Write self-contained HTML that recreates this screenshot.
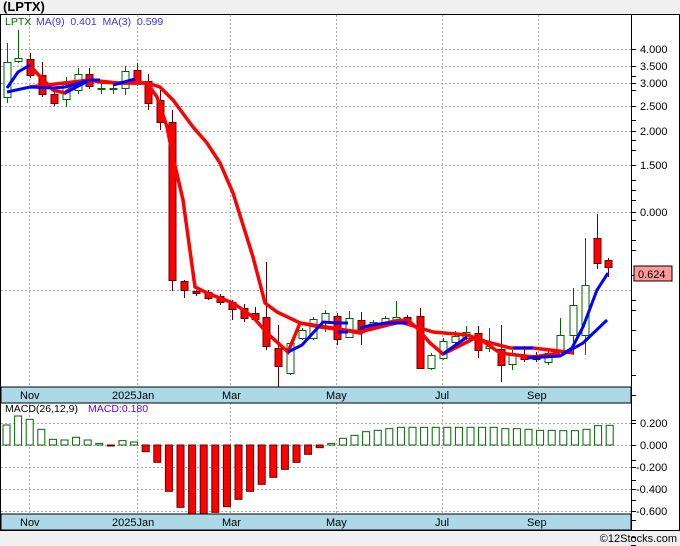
<!DOCTYPE html>
<html><head><meta charset="utf-8"><style>
body{margin:0;width:680px;height:546px;background:#f0f0f0;font-family:"Liberation Sans",sans-serif;overflow:hidden;position:relative}
svg{position:absolute;left:0;top:0}
</style></head><body>
<svg id="s" width="680" height="546" xmlns="http://www.w3.org/2000/svg" font-family="Liberation Sans, sans-serif">
<text x="3" y="11" font-size="13" font-weight="bold" fill="#000">(LPTX)</text>
<rect x="0.5" y="14.5" width="679" height="516" fill="#fff" stroke="#000"/>
<g id="grid" stroke="#aaa" stroke-dasharray="2,2" stroke-width="1"></g>
<g id="c"></g>
<polyline fill="none" stroke="#f00" stroke-width="3.5" points="30,87 90,80 117,83 147,83 160,87 173,100 193,127 207,143 220,163 233,193 253,257 265,303 277,312 300,323 320,327 360,332 400,322 417,327 433,332 467,335 487,342 510,348 533,348 567,352 573,353"/>
<polyline fill="none" stroke="#f00" stroke-width="3.5" points="30,66 53,90 65,93 77,83 90,80 100,82 117,83 147,83 157,97 167,127 173,157 183,200 195,287 207,293 233,303 253,317 267,333 288,352 300,323 333,328 360,333 377,325 400,320 410,322 417,328 430,343 443,354 477,337 500,353 533,357 560,353"/>
<g fill="none" stroke="#00f" stroke-width="3">
<polyline points="7,92 30,87 53,88 65,87 90,80 100,80"/>
<polyline points="7,88 18,72 30,65"/>
<polyline points="65,93 90,80"/>
<polyline points="113,85 135,79"/>
<polyline points="288,352 302,345 323,322 337,323 348,323"/>
<polyline points="337,332 348,332"/>
<polyline points="360,328 372,325 387,323 407,323"/>
<polyline points="443,354 467,337"/>
<polyline points="513,348 533,348"/>
<polyline points="527,358 560,356 572,348 583,327 597,290 608,273"/>
<polyline points="560,356 583,343 607,320"/>
</g>
<rect x="1" y="387" width="630" height="16" fill="#add8e6" stroke="#000"/>
<rect x="1" y="514" width="630" height="16" fill="#add8e6" stroke="#000"/>
<line x1="631.5" y1="14" x2="631.5" y2="530" stroke="#000"/>
<g font-size="11" fill="#000" id="xl"></g>
<g font-size="11" fill="#000" id="yl"></g>
<text x="5" y="25" font-size="10.5" fill="#060">LPTX</text>
<text x="36" y="25" font-size="10.5" fill="#33f" xml:space="preserve">MA(9)  0.401  MA(3)  0.599</text>
<text x="5" y="412" font-size="10.5" fill="#000">MACD(26,12,9)</text>
<text x="88" y="412" font-size="10.5" fill="#60f">MACD:0.180</text>
<rect x="634" y="266" width="38" height="15" fill="#f99" stroke="#000"/>
<text x="638" y="278" font-size="11" fill="#000">0.624</text>
<text x="677" y="542" font-size="11" text-anchor="end" fill="#000">©12Stocks.com</text>
</svg>
<script>
var NS="http://www.w3.org/2000/svg";
function el(p,t,a,tx){var e=document.createElementNS(NS,t);for(var k in a)e.setAttribute(k,a[k]);if(tx)e.textContent=tx;document.getElementById(p).appendChild(e);}
[29,137,230,336,442,538].forEach(function(x){el("grid","line",{x1:x+.5,y1:15,x2:x+.5,y2:387});el("grid","line",{x1:x+.5,y1:403,x2:x+.5,y2:514});});
[49,66,83,106,131,165,212,290].forEach(function(y){el("grid","line",{x1:1,y1:y+.5,x2:631,y2:y+.5});});
[423,445,467,489,511].forEach(function(y){el("grid","line",{x1:1,y1:y+.5,x2:631,y2:y+.5});});
[["4.000",49],["3.500",66],["3.000",83],["2.500",106],["2.000",131],["1.500",165],["0.000",212]].forEach(function(a){el("yl","text",{x:640,y:a[1]+4},a[0]);el("yl","line",{x1:631,y1:a[1]+.5,x2:636,y2:a[1]+.5,stroke:"#000"});});
[["0.200",423],["0.000",445],["-0.200",467],["-0.400",489],["-0.600",511]].forEach(function(a){el("yl","text",{x:a[0][0]=="-"?636:640,y:a[1]+4},a[0]);el("yl","line",{x1:631,y1:a[1]+.5,x2:636,y2:a[1]+.5,stroke:"#000"});});
[76,90,120,140,150,180,190,200,220,240,250,275,300,310,330,350,375,395,420,460,480,500,520,537,545].forEach(function(y){el("yl","line",{x1:631,y1:y+.5,x2:636,y2:y+.5,stroke:"#000"});});
[["Nov",20],["2025Jan",112],["Mar",222],["May",326],["Jul",435],["Sep",527]].forEach(function(a){el("xl","text",{x:a[1],y:399},a[0]);el("xl","text",{x:a[1],y:526},a[0]);});
var C=[[7,62,97,43,103,"g"],[18,58,61,30,63,"g"],[30,59,75,53,78,"r"],[42,75,94,62,97,"r"],[54,94,103,91,106,"r"],[66,84,99,77,107,"g"],[78,74,90,68,94,"g"],[89,74,86,68,89,"r"],[101,88,89,84,94,"g"],[113,88,89,84,94,"g"],[125,71,88,66,95,"g"],[137,70,82,63,86,"r"],[148,81,103,74,110,"r"],[160,100,122,90,130,"r"],[172,122,280,110,291,"r"],[184,281,290,280,298,"r"],[196,291,293,290,296,"r"],[208,292,298,290,300,"r"],[220,296,302,294,305,"r"],[232,302,309,300,320,"r"],[244,308,318,304,322,"r"],[255,313,319,307,322,"r"],[266,317,346,262,350,"r"],[278,348,366,325,387,"r"],[290,343,373,342,375,"g"],[302,330,338,328,340,"g"],[313,319,338,317,340,"g"],[325,313,322,310,332,"g"],[337,316,339,313,345,"r"],[349,318,337,311,338,"g"],[361,320,329,312,345,"r"],[373,322,327,320,330,"g"],[385,318,325,316,327,"g"],[396,317,322,301,324,"g"],[407,317,322,315,324,"r"],[420,316,368,308,368,"r"],[431,355,368,353,370,"g"],[443,341,358,338,360,"g"],[455,336,342,331,346,"g"],[466,332,338,326,340,"g"],[478,333,350,326,358,"r"],[489,346,348,328,352,"g"],[501,349,365,325,382,"r"],[512,354,364,350,370,"g"],[524,355,359,346,362,"r"],[536,355,359,352,362,"r"],[548,353,362,349,365,"g"],[560,335,354,318,356,"g"],[573,305,335,288,355,"g"],[585,285,335,238,355,"g"],[597,238,263,214,269,"r"],[608,260,267,258,277,"r"]];
C.forEach(function(c){var g=c[5]=="g",col=g?"#060":"#600";el("c","line",{x1:c[0]+.5,y1:c[3],x2:c[0]+.5,y2:c[4],stroke:col});el("c","rect",{x:c[0]-3,y:c[1]+.5,width:7,height:Math.max(1,c[2]-c[1]),fill:g?"#fff":"#f00",stroke:col});});
var V=[165,138,148,178,208,210,202,210,220,225,212,216,245,277,364,412,432,435,427,410,388,364,343,322,298,277,253,233,220,205,196,185,181,176,172,172,172,172,172,172,172,172,172,176,176,178,181,181,182,182,178,167,166];
var z=445;V.forEach(function(v,i){var y=370+v/3,x=3+i*11.6;var g=y<z;el("c","rect",{x:x,y:g?y:z,width:7,height:Math.max(1,Math.abs(y-z)),fill:g?"#fff":"#f00",stroke:g?"#060":"#600"});});
</script>
</body></html>
